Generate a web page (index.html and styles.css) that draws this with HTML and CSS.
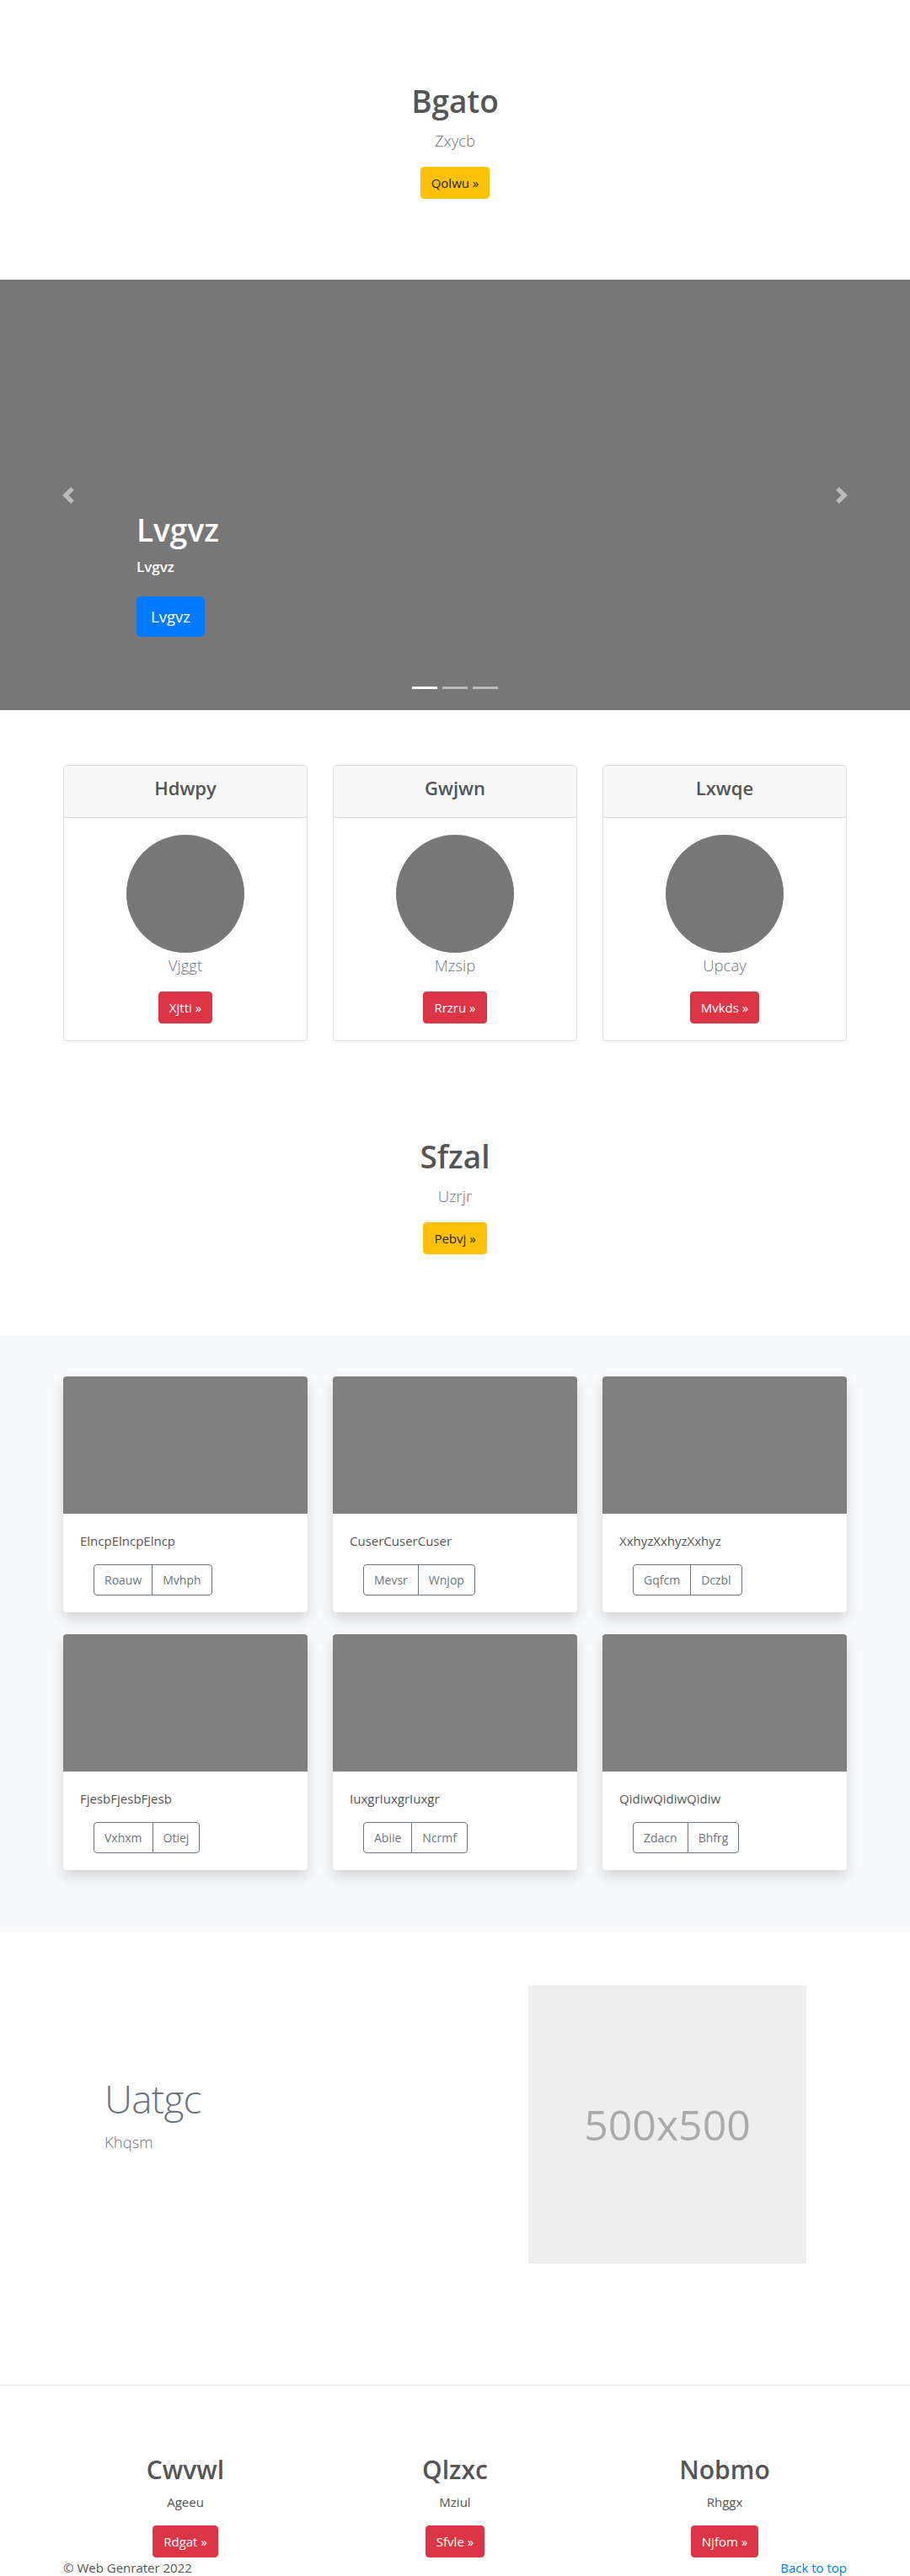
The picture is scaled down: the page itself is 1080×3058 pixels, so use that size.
FILE: index.html
```html
<!DOCTYPE html>
<html>
<head>
    <meta charset="utf-8">
    <link rel="stylesheet" href="styles.css">
</head>
<body>
    <section class="intro">
        <h1 class="intro-title">Bgato</h1>
        <p class="lead intro-lead">Zxycb</p>
        <a class="btn btn-warning" href="#">Qolwu &raquo;</a>
    </section>

    <div class="slider">
        <a class="slider-ctrl prev" href="#">
            <svg viewBox="0 0 8 8"><path fill="#fff" d="M5.25 0l-4 4 4 4 1.5-1.5L4.25 4l2.5-2.5L5.25 0z"/></svg>
        </a>
        <a class="slider-ctrl next" href="#">
            <svg viewBox="0 0 8 8"><path fill="#fff" d="M2.75 0l-1.5 1.5L3.75 4l-2.5 2.5L2.75 8l4-4-4-4z"/></svg>
        </a>
        <div class="slider-caption">
            <h1>Lvgvz</h1>
            <p>Lvgvz</p>
            <a class="btn btn-primary btn-lg" href="#">Lvgvz</a>
        </div>
        <ol class="slider-dots">
            <li class="active"></li>
            <li></li>
            <li></li>
        </ol>
    </div>

    <section class="teams">
        <div class="wrap deck">
            <div class="team-card">
                <div class="team-head"><h4>Hdwpy</h4></div>
                <div class="team-body">
                    <div class="avatar"></div>
                    <p class="lead muted">Vjggt</p>
                    <a class="btn btn-danger" href="#">Xjtti &raquo;</a>
                </div>
            </div>
            <div class="team-card">
                <div class="team-head"><h4>Gwjwn</h4></div>
                <div class="team-body">
                    <div class="avatar"></div>
                    <p class="lead muted">Mzsip</p>
                    <a class="btn btn-danger" href="#">Rrzru &raquo;</a>
                </div>
            </div>
            <div class="team-card">
                <div class="team-head"><h4>Lxwqe</h4></div>
                <div class="team-body">
                    <div class="avatar"></div>
                    <p class="lead muted">Upcay</p>
                    <a class="btn btn-danger" href="#">Mvkds &raquo;</a>
                </div>
            </div>
        </div>
    </section>

    <section class="intro">
        <h1 class="intro-title">Sfzal</h1>
        <p class="lead intro-lead">Uzrjr</p>
        <a class="btn btn-warning" href="#">Pebvj &raquo;</a>
    </section>

    <section class="album">
        <div class="wrap album-grid">
            <div class="album-card">
                <div class="album-thumb"></div>
                <div class="album-body">
                    <p>ElncpElncpElncp</p>
                    <div class="btn-group"><a class="btn btn-outline" href="#">Roauw</a><a class="btn btn-outline" href="#">Mvhph</a></div>
                </div>
            </div>
            <div class="album-card">
                <div class="album-thumb"></div>
                <div class="album-body">
                    <p>CuserCuserCuser</p>
                    <div class="btn-group"><a class="btn btn-outline" href="#">Mevsr</a><a class="btn btn-outline" href="#">Wnjop</a></div>
                </div>
            </div>
            <div class="album-card">
                <div class="album-thumb"></div>
                <div class="album-body">
                    <p>XxhyzXxhyzXxhyz</p>
                    <div class="btn-group"><a class="btn btn-outline" href="#">Gqfcm</a><a class="btn btn-outline" href="#">Dczbl</a></div>
                </div>
            </div>
            <div class="album-card">
                <div class="album-thumb"></div>
                <div class="album-body">
                    <p>FjesbFjesbFjesb</p>
                    <div class="btn-group"><a class="btn btn-outline" href="#">Vxhxm</a><a class="btn btn-outline" href="#">Otiej</a></div>
                </div>
            </div>
            <div class="album-card">
                <div class="album-thumb"></div>
                <div class="album-body">
                    <p>IuxgrIuxgrIuxgr</p>
                    <div class="btn-group"><a class="btn btn-outline" href="#">Abiie</a><a class="btn btn-outline" href="#">Ncrmf</a></div>
                </div>
            </div>
            <div class="album-card">
                <div class="album-thumb"></div>
                <div class="album-body">
                    <p>QidiwQidiwQidiw</p>
                    <div class="btn-group"><a class="btn btn-outline" href="#">Zdacn</a><a class="btn btn-outline" href="#">Bhfrg</a></div>
                </div>
            </div>
        </div>
    </section>

    <section class="feature">
        <div class="wrap feature-row">
            <div class="feature-text">
                <h2 class="feature-title">Uatgc</h2>
                <p class="lead">Khqsm</p>
            </div>
            <div class="placeholder">500x500</div>
        </div>
    </section>

    <section class="marketing">
        <div class="wrap">
            <div class="marketing-row">
                <div class="marketing-col">
                    <h2>Cwvwl</h2>
                    <p>Ageeu</p>
                    <a class="btn btn-danger" href="#">Rdgat &raquo;</a>
                </div>
                <div class="marketing-col">
                    <h2>Qlzxc</h2>
                    <p>Mziul</p>
                    <a class="btn btn-danger" href="#">Sfvle &raquo;</a>
                </div>
                <div class="marketing-col">
                    <h2>Nobmo</h2>
                    <p>Rhggx</p>
                    <a class="btn btn-danger" href="#">Njfom &raquo;</a>
                </div>
            </div>
            <footer class="foot">
                <p>&copy; Web Genrater 2022</p>
                <a href="#">Back to top</a>
            </footer>
        </div>
    </section>
</body>
</html>
```

FILE: styles.css
```css
*{
    box-sizing: border-box;
}
body{
    margin: 0;
    font-family: "Open Sans", "Noto Sans", sans-serif;
    font-size: 15px;
    line-height: 24px;
    color: #555;
    background-color: #fff;
}
h1, h2, h4, p{
    margin: 0;
}
a{
    text-decoration: none;
}
.wrap{
    width: 960px;
    margin: 0 auto;
    padding: 0 15px;
}

/* buttons */
.btn{
    display: inline-block;
    font-size: 15px;
    line-height: 24px;
    padding: 6px 12px;
    border: 1px solid transparent;
    border-radius: 4px;
}
.btn-warning{
    background-color: #ffc107;
    border-color: #ffc107;
    color: #212529;
}
.btn-danger{
    background-color: #dc3545;
    border-color: #dc3545;
    color: #fff;
}
.btn-primary{
    background-color: #007bff;
    border-color: #007bff;
    color: #fff;
}
.btn-lg{
    font-size: 18.5px;
    line-height: 30px;
    padding: 8px 16px;
    border-radius: 5px;
}
.lead{
    font-size: 18.5px;
    line-height: 30px;
    font-weight: 300;
}
.muted{
    color: #6c757d;
}

/* intro blocks */
.intro{
    padding: 96px 0;
    text-align: center;
}
.intro-title{
    font-size: 37px;
    line-height: 48px;
    font-weight: 600;
    margin-bottom: 8px;
}
.intro-lead{
    color: #6c757d;
    margin-bottom: 16px;
}

/* carousel */
.slider{
    position: relative;
    height: 511px;
    background-color: #777;
}
.slider-ctrl{
    position: absolute;
    top: 0;
    bottom: 0;
    width: 15%;
    display: flex;
    align-items: center;
    justify-content: center;
    opacity: .5;
}
.slider-ctrl.prev{
    left: 0;
}
.slider-ctrl.next{
    right: 0;
}
.slider-ctrl svg{
    width: 20px;
    height: 20px;
}
.slider-caption{
    position: absolute;
    left: 15%;
    right: 15%;
    bottom: 87px;
    color: #fff;
}
.slider-caption h1{
    font-size: 37px;
    line-height: 48px;
    font-weight: 600;
    margin-bottom: 8px;
}
.slider-caption p{
    font-size: 17px;
    font-weight: 600;
    margin-bottom: 23px;
}
.slider-dots{
    position: absolute;
    left: 0;
    right: 0;
    bottom: 25px;
    display: flex;
    justify-content: center;
    list-style: none;
    margin: 0;
    padding: 0;
}
.slider-dots li{
    width: 30px;
    height: 3px;
    margin: 0 3px;
    background-color: rgba(255,255,255,.5);
}
.slider-dots li.active{
    background-color: #fff;
}

/* team cards */
.teams{
    padding: 65px 0 17px;
}
.deck{
    display: flex;
    gap: 30px;
}
.team-card{
    flex: 1;
    border: 1px solid rgba(0,0,0,.125);
    border-radius: 4px;
    text-align: center;
    overflow: hidden;
}
.team-head{
    background-color: rgba(0,0,0,.03);
    border-bottom: 1px solid rgba(0,0,0,.125);
    padding: 12px 20px;
}
.team-head h4{
    font-size: 22px;
    line-height: 29px;
    font-weight: 600;
    margin-bottom: 8px;
}
.team-body{
    padding: 20px;
}
.avatar{
    width: 140px;
    height: 140px;
    margin: 0 auto;
    border-radius: 50%;
    background-color: #777;
}
.team-body .lead{
    margin-bottom: 16px;
}

/* album */
.album{
    background-color: #f8f9fa;
    padding: 49px 0 73px;
}
.album-grid{
    display: grid;
    grid-template-columns: repeat(3, 1fr);
    column-gap: 30px;
    row-gap: 26px;
}
.album-card{
    background-color: #fff;
    border-radius: 4px;
    overflow: hidden;
    box-shadow: 0 8px 16px rgba(0,0,0,.15);
}
.album-thumb{
    height: 163px;
    background-color: #808080;
}
.album-body{
    padding: 20px;
}
.album-body p{
    margin-bottom: 16px;
}
.btn-group{
    display: inline-flex;
    margin-left: 16px;
}
.btn-outline{
    font-size: 14px;
    line-height: 21px;
    padding: 7px 12px;
    color: #6c757d;
    border-color: #6c757d;
}
.btn-group .btn-outline:first-child{
    border-top-right-radius: 0;
    border-bottom-right-radius: 0;
}
.btn-group .btn-outline + .btn-outline{
    margin-left: -1px;
    border-top-left-radius: 0;
    border-bottom-left-radius: 0;
}

/* featurette */
.feature{
    padding: 64px 0 144px;
    border-bottom: 1px solid #e5e5e5;
}
.feature-row{
    display: flex;
    align-items: center;
}
.feature-text{
    flex: 1;
    padding-left: 49px;
}
.feature-title{
    font-size: 46px;
    line-height: 50px;
    font-weight: 300;
    letter-spacing: -.8px;
    color: #6c757d;
    margin-bottom: 12px;
}
.feature-text .lead{
    color: #6c757d;
    margin-bottom: 20px;
}
.placeholder{
    width: 330px;
    height: 330px;
    margin-right: 48px;
    display: flex;
    align-items: center;
    justify-content: center;
    background-color: #eee;
    color: #aaa;
    font-size: 50px;
}

/* marketing */
.marketing{
    padding-top: 81px;
}
.marketing-row{
    display: grid;
    grid-template-columns: repeat(3, 1fr);
    margin: 0 -15px;
    text-align: center;
}
.marketing-col h2{
    font-size: 30px;
    line-height: 38px;
    font-weight: 600;
    margin-bottom: 7px;
}
.marketing-col p{
    margin-bottom: 16px;
}
.foot{
    display: flex;
    justify-content: space-between;
}
.foot a{
    color: #007bff;
}
```
